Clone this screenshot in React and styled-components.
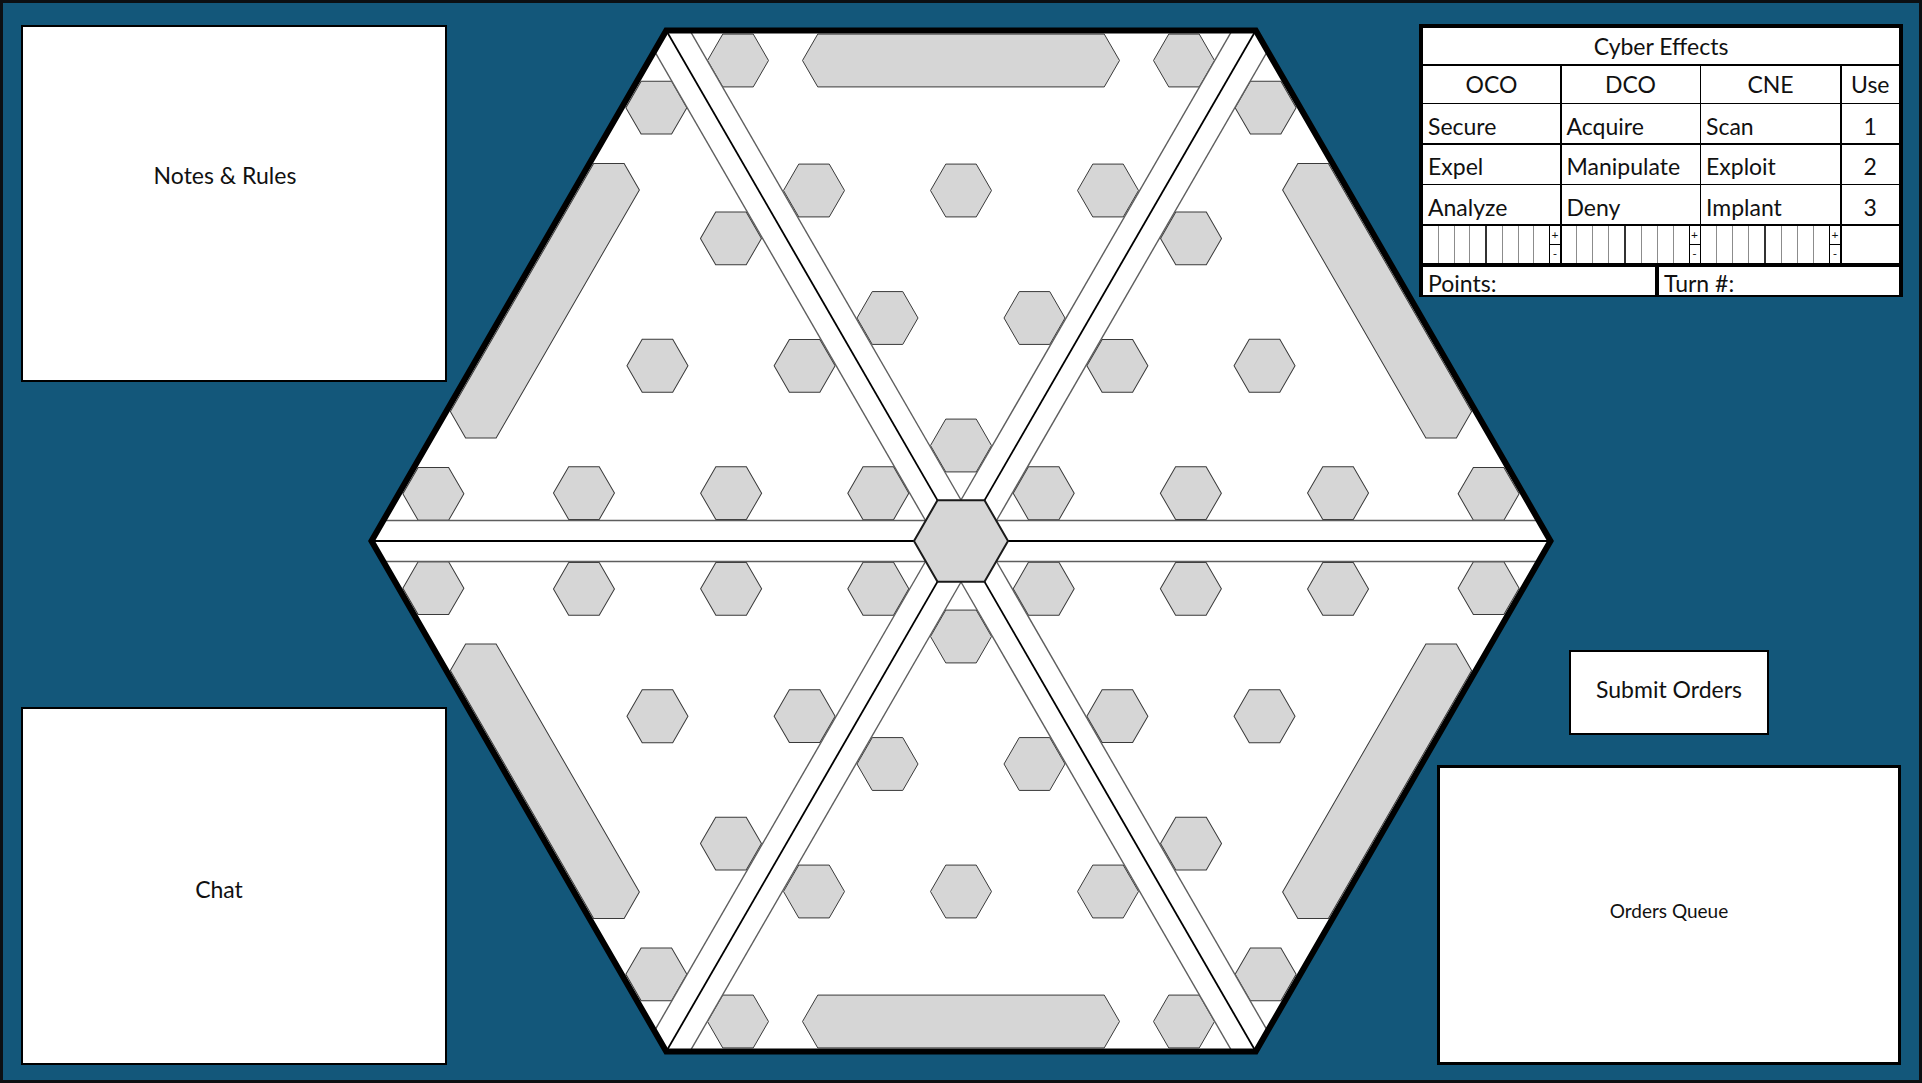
import React from "react";
import styled, { createGlobalStyle } from "styled-components";

const GlobalStyle = createGlobalStyle`
  html, body {
    margin: 0;
    padding: 0;
    background: #13577a;
  }
  body {
    font-family: Lato, "Open Sans", sans-serif;
    color: #111;
  }
  * {
    box-sizing: border-box;
  }
`;

const Screen = styled.div`
  width: 1922px;
  height: 1083px;
  border: 3px solid #0c0f12;
  background: #13577a;
  display: grid;
  grid-template-columns: 426px minmax(0, 1fr) 484px;
  grid-template-rows: minmax(0, 1fr);
  padding: 22px 16px 15px 18px;
  overflow: hidden;
`;

const LeftColumn = styled.aside`
  display: flex;
  flex-direction: column;
  justify-content: space-between;
`;

const RightColumn = styled.aside`
  display: flex;
  flex-direction: column;
  position: relative;
`;

const Panel = styled.section`
  height: ${(p) => p.$h}px;
  background: #fff;
  border: ${(p) => p.$border || 2}px solid #000;
  display: flex;
  align-items: center;
  justify-content: center;
  padding: ${(p) => p.$pad || "0"};
  font-size: ${(p) => p.$size || 23}px;
  line-height: 1;
`;

const BoardArea = styled.main`
  min-width: 0;
`;

const BoardSvg = styled.svg`
  display: block;
  width: 1200px;
  height: 1060px;
  margin: -14px 0 0 -86px;
  overflow: visible;
`;

const Effects = styled.div`
  width: 484px;
  margin-top: -1px;
  border: 4px solid #000;
  background: #000;
  display: grid;
  grid-template-columns: 137px 138px 139px 1fr;
  grid-template-rows: 36px 37px 39px 39px 39px 37px 29px;
  gap: 1.5px;
`;

const Cell = styled.div`
  background: #fff;
  display: flex;
  align-items: center;
  justify-content: ${(p) => (p.$center ? "center" : "flex-start")};
  padding: ${(p) => (p.$low ? "5px" : "0")} 0 0 ${(p) => (p.$center ? "0" : "5px")};
  font-size: 23px;
  line-height: 1;
  white-space: nowrap;
`;

const Title = styled(Cell)`
  grid-column: 1 / -1;
`;

const Tracker = styled.div`
  background: #fff;
  display: flex;
`;

const Tick = styled.div`
  flex: 1;
  border-right: ${(p) => (p.$heavy ? "2px solid #333" : p.$last ? "none" : "1px solid #8c8c8c")};
`;

const Adjust = styled.div`
  width: 11px;
  border-left: 1px solid #000;
  display: flex;
  flex-direction: column;
  font-size: 12px;
  line-height: 1;

  span {
    flex: 1;
    display: flex;
    align-items: center;
    justify-content: center;
  }
  span:first-child {
    border-bottom: 1px solid #000;
  }
`;

const Footer = styled.div`
  grid-column: 1 / -1;
  margin-top: 3px;
  display: grid;
  grid-template-columns: 232px 1fr;
  gap: 4px;
`;

const SubmitButton = styled.button`
  margin: auto 0 0 150px;
  width: 200px;
  height: 85px;
  background: #fff;
  border: 2.5px solid #000;
  font-family: Lato, "Open Sans", sans-serif;
  font-size: 23px;
  line-height: 1;
  color: #111;
  padding: 0 0 6px;
`;

const Queue = styled(Panel)`
  margin: 30px 2px 0 18px;
`;

const R = 589.5;
const ANGLES = [0, 60, 120, 180, 240, 300];
const STRIP = 20.5;

const hexPoints = (r) => {
  const h = r * 0.866;
  return `${r},0 ${r / 2},${h} ${-r / 2},${h} ${-r},0 ${-r / 2},${-h} ${r / 2},${-h}`;
};

const barPoints = (len, r) => {
  const h = r * 0.866;
  const s = len - r / 2;
  return `${len},0 ${s},${h} ${-s},${h} ${-len},0 ${-s},${-h} ${s},${-h}`;
};

// node centres for one wedge (the top one); the others are rotations
const NODES = [
  [0, -95.5],
  [-73.5, -223],
  [73.5, -223],
  [-147, -350.5],
  [0, -350.5],
  [147, -350.5],
  [-223, -480.5],
  [223, -480.5],
];

const SMALL = hexPoints(30.5);

const Board = () => (
  <BoardSvg viewBox="-600 -530 1200 1060">
    <defs>
      <clipPath id="board-clip">
        <polygon points={hexPoints(R)} />
      </clipPath>
    </defs>
    <polygon points={hexPoints(R)} fill="#fff" />
    <g clipPath="url(#board-clip)">
      {ANGLES.map((a) => (
        <g key={a} transform={`rotate(${a})`} fill="#d6d6d6" stroke="#3a3a3a" strokeWidth="1">
          {NODES.map(([x, y], i) => (
            <polygon key={i} points={SMALL} transform={`translate(${x} ${y})`} />
          ))}
          <polygon points={barPoints(158.5, 30.5)} transform="translate(0 -480.5)" />
        </g>
      ))}
      {ANGLES.map((a) => (
        <rect key={a} x="0" y={-STRIP} width={R + 20} height={STRIP * 2} fill="#fff" transform={`rotate(${a})`} />
      ))}
      {ANGLES.map((a) => (
        <g key={a} transform={`rotate(${a})`}>
          <line x1="35.5" y1={-STRIP} x2={R + 20} y2={-STRIP} stroke="#5e5e5e" strokeWidth="1.4" />
          <line x1="35.5" y1={STRIP} x2={R + 20} y2={STRIP} stroke="#5e5e5e" strokeWidth="1.4" />
          <line x1="40" y1="0" x2={R + 20} y2="0" stroke="#000" strokeWidth="1.8" />
        </g>
      ))}
    </g>
    <polygon points={hexPoints(R)} fill="none" stroke="#000" strokeWidth="6" strokeLinejoin="miter" />
    <polygon points={hexPoints(47)} fill="#d6d6d6" stroke="#1a1a1a" strokeWidth="2" />
  </BoardSvg>
);

const ROWS = [
  ["Secure", "Acquire", "Scan", "1"],
  ["Expel", "Manipulate", "Exploit", "2"],
  ["Analyze", "Deny", "Implant", "3"],
];

const TrackerCell = () => (
  <Tracker>
    {Array.from({ length: 8 }).map((_, i) => (
      <Tick key={i} $heavy={i === 3} $last={i === 7} />
    ))}
    <Adjust>
      <span>+</span>
      <span>-</span>
    </Adjust>
  </Tracker>
);

const CyberEffects = () => (
  <Effects>
    <Title $center>Cyber Effects</Title>
    <Cell $center>OCO</Cell>
    <Cell $center>DCO</Cell>
    <Cell $center>CNE</Cell>
    <Cell $center>Use</Cell>
    {ROWS.map((row) =>
      row.map((text, i) => (
        <Cell key={text} $low $center={i === 3}>
          {text}
        </Cell>
      ))
    )}
    <TrackerCell />
    <TrackerCell />
    <TrackerCell />
    <Tracker />
    <Footer>
      <Cell $low>Points:</Cell>
      <Cell $low>Turn #:</Cell>
    </Footer>
  </Effects>
);

export default function App() {
  return (
    <>
      <GlobalStyle />
      <Screen>
        <LeftColumn>
          <Panel $h={357} $pad="0 18px 56px 0">
            Notes &amp; Rules
          </Panel>
          <Panel $h={358} $pad="6px 30px 0 0">
            Chat
          </Panel>
        </LeftColumn>
        <BoardArea>
          <Board />
        </BoardArea>
        <RightColumn>
          <CyberEffects />
          <SubmitButton>Submit Orders</SubmitButton>
          <Queue $h={300} $border={3} $size={19} $pad="0 0 10px">
            Orders Queue
          </Queue>
        </RightColumn>
      </Screen>
    </>
  );
}
